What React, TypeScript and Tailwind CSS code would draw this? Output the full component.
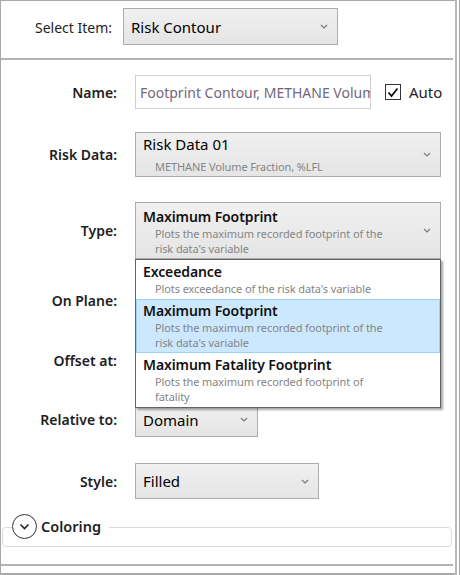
import React from "react";

const FONT = { fontFamily: '"Segoe UI", "Noto Sans", "Liberation Sans", sans-serif' };

function Chevron() {
  return (
    <svg width="8" height="5" viewBox="0 0 8 5">
      <polyline points="1,1 4,4 7,1" fill="none" stroke="#7a7a7a" strokeWidth="1.2" />
    </svg>
  );
}

function ComboBox({
  width,
  height,
  children,
}: {
  width: string;
  height: string;
  children?: React.ReactNode;
}) {
  return (
    <div
      className={`${width} ${height} relative flex border border-[#acacac] bg-gradient-to-b from-[#f0f0f0] to-[#e5e5e5]`}
    >
      <div className="min-w-0 flex-1">{children}</div>
      <div className="flex w-[22px] items-center justify-center pr-[4px]">
        <Chevron />
      </div>
    </div>
  );
}

function Row({ label, top, children }: { label: string; top: string; children: React.ReactNode }) {
  return (
    <div className={`flex items-center ${top}`}>
      <div className="w-[116px] shrink-0 text-right text-[14px] font-semibold text-[#1e1e1e]">{label}</div>
      <div className="ml-[18px] flex items-center">{children}</div>
    </div>
  );
}

type Option = { title: string; desc: string[]; selected?: boolean; h: string };

const TYPE_OPTIONS: Option[] = [
  { title: "Exceedance", desc: ["Plots exceedance of the risk data's variable"], h: "h-[39px]" },
  {
    title: "Maximum Footprint",
    desc: ["Plots the maximum recorded footprint of the", "risk data's variable"],
    selected: true,
    h: "h-[54px]",
  },
  {
    title: "Maximum Fatality Footprint",
    desc: ["Plots the maximum recorded footprint of", "fatality"],
    h: "h-[54px]",
  },
];

function Description({ lines }: { lines: string[] }) {
  return (
    <div className="pl-[12px] text-[11px] leading-[14.5px] tracking-[-0.1px] text-[#858585]">
      {lines.map((d) => (
        <div key={d}>{d}</div>
      ))}
    </div>
  );
}

function TypeDropdown() {
  return (
    <div className="absolute left-[135px] top-[259px] w-[306px] border border-[#646464] bg-white shadow-[2px_2px_2px_rgba(0,0,0,0.35)]">
      {TYPE_OPTIONS.map((o) => (
        <div
          key={o.title}
          className={`${o.h} border pl-[6px] ${
            o.selected ? "border-[#99d1ff] bg-[#cce8ff]" : "border-transparent"
          }`}
        >
          <div className="pt-[1px] text-[14px] font-semibold leading-[20px] tracking-[-0.1px] text-[#111]">
            {o.title}
          </div>
          <Description lines={o.desc} />
        </div>
      ))}
    </div>
  );
}

export default function App() {
  return (
    <div className="relative flex h-[575px] w-[460px] bg-white text-black" style={FONT}>
      <div className="flex w-[455px] flex-col border-l border-t border-l-[#a8a8a8] border-t-[#a8a8a8]">
        {/* item picker */}
        <div className="flex h-[57px] items-start pt-[7px]">
          <div className="ml-[34px] mt-[9px] w-[80px] text-[14px] text-[#1e1e1e]">Select Item:</div>
          <div className="ml-[8px]">
            <ComboBox width="w-[215px]" height="h-[37px]">
              <div className="pl-[7px] pt-[7px] text-[15px] text-black">Risk Contour</div>
            </ComboBox>
          </div>
        </div>
        <div className="h-[2px] w-[452px] bg-[#b4b4b4]" />

        {/* properties */}
        <Row label="Name:" top="mt-[15px]">
          <div className="flex h-[34px] w-[236px] items-center overflow-hidden whitespace-nowrap border border-[#cfcfcf] pl-[4px] text-[14px] text-[#72687c]">
            Footprint Contour, METHANE Volume Fraction, %LFL
          </div>
          <div className="ml-[14px] flex h-[16px] w-[16px] items-center justify-center border border-[#333] bg-white">
            <svg width="12" height="11" viewBox="0 0 12 11">
              <polyline points="1.5,5.5 4.5,9 10.5,1.5" fill="none" stroke="#111" strokeWidth="1.8" />
            </svg>
          </div>
          <div className="ml-[8px] text-[15px] text-[#1e1e1e]">Auto</div>
        </Row>

        <Row label="Risk Data:" top="mt-[23px]">
          <ComboBox width="w-[306px]" height="h-[45px]">
            <div className="pl-[7px] pt-[1px] text-[15px] leading-[20px] text-black">Risk Data 01</div>
            <div className="pl-[19px] pt-[6px] text-[11px] leading-[14px] tracking-[-0.1px] text-[#858585]">
              METHANE Volume Fraction, %LFL
            </div>
          </ComboBox>
        </Row>

        <Row label="Type:" top="mt-[25px]">
          <ComboBox width="w-[306px]" height="h-[57px]">
            <div className="pl-[7px] pt-[4px] text-[14px] font-semibold leading-[20px] tracking-[-0.1px] text-[#111]">
              Maximum Footprint
            </div>
            <div className="pl-[7px]">
              <Description lines={["Plots the maximum recorded footprint of the", "risk data's variable"]} />
            </div>
          </ComboBox>
        </Row>

        {/* these two controls sit under the open Type list */}
        <Row label="On Plane:" top="mt-[24px]">
          <ComboBox width="w-[122px]" height="h-[35px]" />
        </Row>

        <Row label="Offset at:" top="mt-[25px]">
          <div className="h-[35px] w-[122px] border border-[#cfcfcf]" />
        </Row>

        <Row label="Relative to:" top="mt-[24px]">
          <ComboBox width="w-[123px]" height="h-[35px]">
            <div className="pl-[7px] pt-[6px] text-[15px] text-black">Domain</div>
          </ComboBox>
        </Row>

        <Row label="Style:" top="mt-[26px]">
          <ComboBox width="w-[184px]" height="h-[36px]">
            <div className="pl-[7px] pt-[6px] text-[15px] text-black">Filled</div>
          </ComboBox>
        </Row>

        {/* collapsed group */}
        <div className="relative ml-[1px] mt-[28px] h-[20px] w-[450px] rounded-[4px] border border-[#d3dde4]">
          <div className="absolute left-[9px] top-[-14px] flex items-center bg-white pr-[8px]">
            <div className="flex h-[25px] w-[25px] items-center justify-center rounded-full border-[1.5px] border-[#333]">
              <svg width="11" height="7" viewBox="0 0 11 7">
                <polyline points="1.5,1.5 5.5,5.5 9.5,1.5" fill="none" stroke="#222" strokeWidth="1.6" />
              </svg>
            </div>
            <span className="ml-[4px] text-[14.5px] font-semibold text-[#1e1e1e]">Coloring</span>
          </div>
        </div>

        <div className="mb-[7px] mt-auto h-[2px] w-[452px] bg-[#b4b4b4]" />
        <div className="h-[2px] w-full bg-[#a8a8a8]" />
      </div>
      <div className="h-full w-[2px] bg-[#b9b9b9]" />
      <div className="ml-[2px] h-full w-[1px] bg-[#a8a8a8]" />

      <TypeDropdown />
    </div>
  );
}
